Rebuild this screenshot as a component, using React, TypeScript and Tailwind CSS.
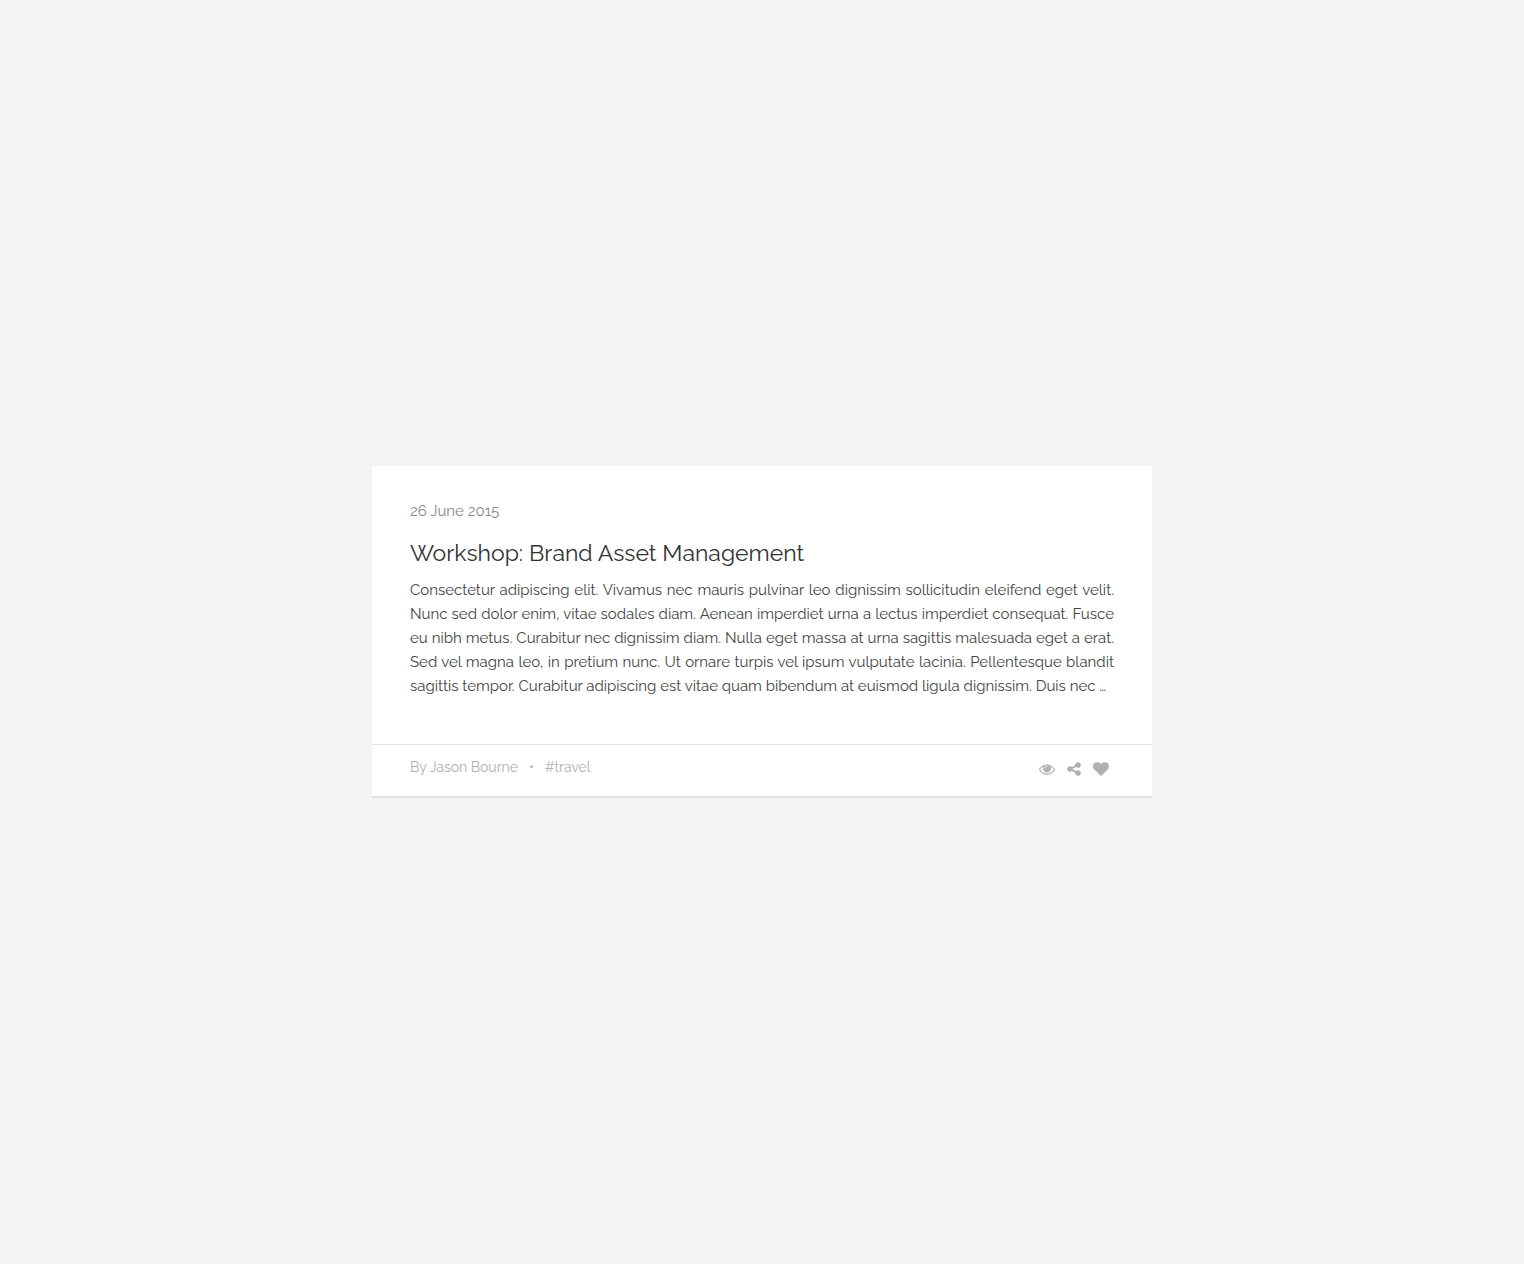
import type { ReactNode } from "react";

function IconButton({ label, children }: { label: string; children: ReactNode }) {
  return (
    <button type="button" aria-label={label} className="cursor-pointer hover:text-[#888]">
      {children}
    </button>
  );
}

function EyeIcon() {
  return (
    <svg viewBox="0 0 1792 1792" fill="currentColor" className="block h-4 w-4" aria-hidden="true">
      <path d="M1664 960q-152-236-381-353 61 104 61 225 0 185-131.5 316.5t-316.5 131.5-316.5-131.5-131.5-316.5q0-121 61-225-229 117-381 353 133 205 333.5 326.5t434.5 121.5 434.5-121.5 333.5-326.5zm-720-384q0-20-14-34t-34-14q-125 0-214.5 89.5t-89.5 214.5q0 20 14 34t34 14 34-14 14-34q0-86 61-147t147-61q20 0 34-14t14-34zm848 384q0 34-20 69-140 230-376.5 368.5t-499.5 138.5-499.5-139-376.5-368q-20-35-20-69t20-69q140-229 376.5-368t499.5-139 499.5 139 376.5 368q20 35 20 69z" />
    </svg>
  );
}

function ShareIcon() {
  return (
    <svg viewBox="128 0 1536 1792" fill="currentColor" className="block h-4 w-[14px]" aria-hidden="true">
      <path d="M1344 1024q133 0 226.5 93.5t93.5 226.5-93.5 226.5-226.5 93.5-226.5-93.5-93.5-226.5q0-12 2-34l-360-180q-92 86-218 86-133 0-226.5-93.5t-93.5-226.5 93.5-226.5 226.5-93.5q126 0 218 86l360-180q-2-22-2-34 0-133 93.5-226.5t226.5-93.5 226.5 93.5 93.5 226.5-93.5 226.5-226.5 93.5q-126 0-218-86l-360 180q2 22 2 34t-2 34l360 180q92-86 218-86z" />
    </svg>
  );
}

function HeartIcon() {
  return (
    <svg viewBox="0 0 1792 1792" fill="currentColor" className="block h-4 w-4" aria-hidden="true">
      <path d="M896 1664q-26 0-44-18l-624-602q-10-8-27.5-26t-55.5-65.5-68-97.5-53.5-121-23.5-138q0-220 127-344t351-124q62 0 126.5 21.5t120 58 95.5 68.5 76 68q36-36 76-68t95.5-68.5 120-58 126.5-21.5q224 0 351 124t127 344q0 221-229 450l-623 600q-18 18-44 18z" />
    </svg>
  );
}

export default function App() {
  return (
    <main className="flex min-h-screen items-center justify-center bg-[#f3f3f3] font-['Raleway','Lato',sans-serif]">
      <article className="w-full max-w-[780px] border-b-2 border-[#e2e2e2] bg-white">
        <div className="px-[38px] pt-[33px] pb-[46px]">
          <time dateTime="2015-06-26" className="block text-[15px] leading-6 text-[#888]">
            26 June 2015
          </time>
          <h1 className="mt-[14px] text-[23px] leading-8 text-[#333]">Workshop: Brand Asset Management</h1>
          <p className="mt-[9px] text-justify text-[15px] leading-6 text-[#444]">
            Consectetur adipiscing elit. Vivamus nec mauris pulvinar leo dignissim sollicitudin eleifend eget velit.
            Nunc sed dolor enim, vitae sodales diam. Aenean imperdiet urna a lectus imperdiet consequat. Fusce eu nibh
            metus. Curabitur nec dignissim diam. Nulla eget massa at urna sagittis malesuada eget a erat. Sed vel magna
            leo, in pretium nunc. Ut ornare turpis vel ipsum vulputate lacinia. Pellentesque blandit sagittis tempor.
            Curabitur adipiscing est vitae quam bibendum at euismod ligula dignissim. Duis nec …
          </p>
        </div>
        <footer className="flex items-start justify-between border-t border-[#e2e2e2] pr-[43px] pl-[38px] text-[#b0b0b0]">
          <ul className="flex gap-[11px] pt-[10px] pb-[17px] text-sm leading-6">
            <li>By Jason Bourne</li>
            <li aria-hidden="true">•</li>
            <li>
              <a href="#travel" className="hover:text-[#888]">#travel</a>
            </li>
          </ul>
          <div className="flex gap-3 pt-4">
            <IconButton label="View"><EyeIcon /></IconButton>
            <IconButton label="Share"><ShareIcon /></IconButton>
            <IconButton label="Like"><HeartIcon /></IconButton>
          </div>
        </footer>
      </article>
    </main>
  );
}
